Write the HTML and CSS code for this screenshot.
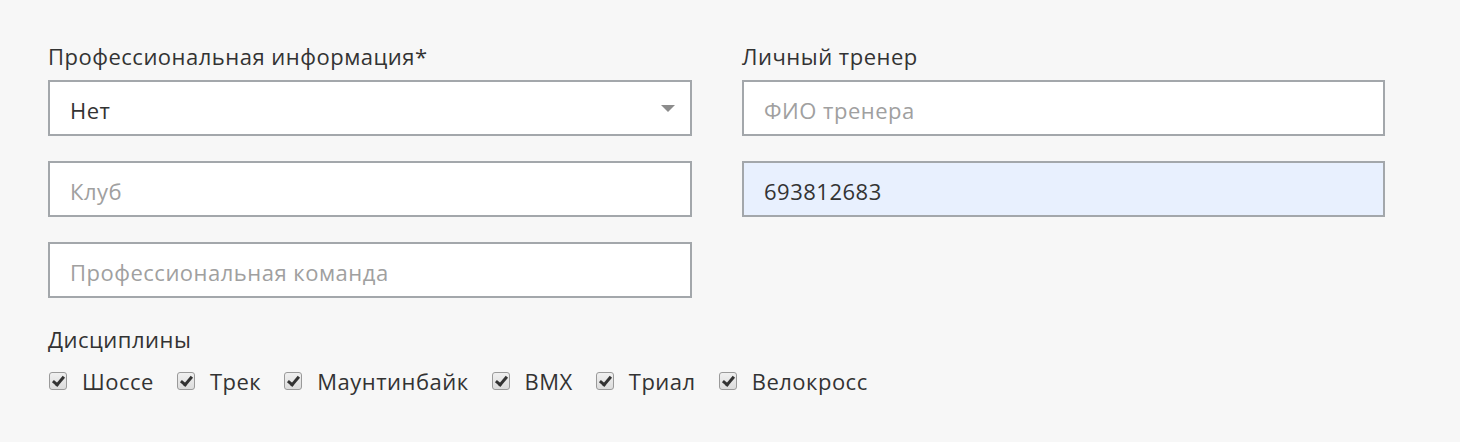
FILE: index.html
```html
<!DOCTYPE html>
<html>
<head>
    <meta charset="utf-8">
    <title>Профессиональная информация</title>
    <link rel="stylesheet" href="styles.css">
</head>
<body>
    <form class="pro-form">
        <div class="col">
            <label class="field-label">Профессиональная информация*</label>
            <div class="select">
                <span>Нет</span>
                <svg class="caret" width="14" height="7" viewBox="0 0 14 7"><path d="M0 0 H14 L7 7 Z" fill="#8c8c8c"/></svg>
            </div>
            <input class="field" type="text" placeholder="Клуб">
            <input class="field" type="text" placeholder="Профессиональная команда">
        </div>
        <div class="col">
            <label class="field-label">Личный тренер</label>
            <input class="field" type="text" placeholder="ФИО тренера">
            <input class="field filled" type="text" value="693812683">
        </div>
        <div class="disciplines">
            <p class="field-label">Дисциплины</p>
            <ul>
                <li><input type="checkbox" checked><span>Шоссе</span></li>
                <li><input type="checkbox" checked><span>Трек</span></li>
                <li><input type="checkbox" checked><span>Маунтинбайк</span></li>
                <li><input type="checkbox" checked><span>BMX</span></li>
                <li><input type="checkbox" checked><span>Триал</span></li>
                <li><input type="checkbox" checked><span>Велокросс</span></li>
            </ul>
        </div>
    </form>
</body>
</html>
```

FILE: styles.css
```css
body {
    margin: 0;
    background-color: #f7f7f7;
    font-family: "Open Sans", sans-serif;
    color: #333;
}

.pro-form {
    display: grid;
    grid-template-columns: 644px 643px;
    column-gap: 50px;
    padding: 41px 0 0 48px;
}

.col {
    display: flex;
    flex-direction: column;
    gap: 25px;
}

.field-label {
    display: block;
    font-size: 22px;
    letter-spacing: 0.5px;
    line-height: 30px;
    margin: 0 0 -16px 0;
    color: #333;
}

.select,
.field {
    box-sizing: border-box;
    height: 56px;
    width: 100%;
    border: 2px solid #a3a7ab;
    background-color: #fff;
    font-family: "Open Sans", sans-serif;
    font-size: 22px;
    letter-spacing: 0.5px;
    color: #333;
    padding: 3px 20px 0 20px;
    margin: 0;
}

.select {
    display: flex;
    align-items: center;
    justify-content: space-between;
    padding-right: 15px;
}

.caret {
    margin-top: -3px;
}

.field::placeholder {
    color: #a0a0a0;
}

.field.filled {
    background-color: #e8f0fe;
}

.disciplines {
    grid-column: 1 / 3;
    padding-top: 26px;
}

.disciplines .field-label {
    margin-bottom: 12px;
}

.disciplines ul {
    list-style: none;
    margin: 0;
    padding: 0;
    display: flex;
    gap: 22px;
}

.disciplines li {
    display: flex;
    align-items: center;
    font-size: 22px;
    letter-spacing: 0.5px;
}

.disciplines input {
    appearance: none;
    -webkit-appearance: none;
    box-sizing: border-box;
    width: 18px;
    height: 18px;
    margin: 0 15px 0 1px;
    border: 1px solid #9a9a9a;
    border-radius: 3px;
    background: linear-gradient(#f0f0f0, #dcdcdc);
    position: relative;
}

.disciplines input:checked::after {
    content: "";
    position: absolute;
    left: 5px;
    top: 1px;
    width: 4px;
    height: 9px;
    border: solid #333;
    border-width: 0 3px 3px 0;
    transform: rotate(40deg);
}
```
